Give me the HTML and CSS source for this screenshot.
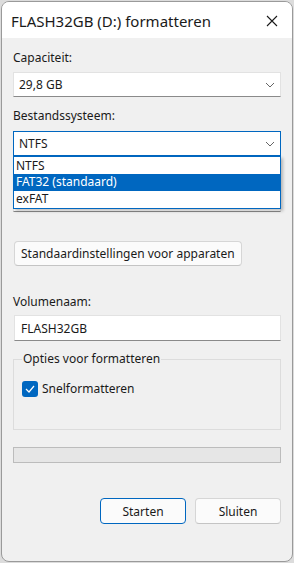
FILE: index.html
```html
<!DOCTYPE html>
<html>

<head>
    <title>FLASH32GB (D:) formatteren</title>
    <link rel="stylesheet" href="styles.css">
</head>

<body>
    <div class="window">
        <div class="titlebar">
            <span class="title">FLASH32GB (D:) formatteren</span>
            <svg class="close" width="12" height="12" viewBox="0 0 12 12">
                <path d="M1 1 L11 11 M11 1 L1 11" stroke="#1a1a1a" stroke-width="1.1" fill="none" />
            </svg>
        </div>
        <div class="content">
            <div class="label first">Capaciteit:</div>
            <div class="combo">
                <span>29,8 GB</span>
                <svg class="chevron" width="10" height="6" viewBox="0 0 10 6">
                    <path d="M1 1 L5 5 L9 1" stroke="#666" stroke-width="1" fill="none" />
                </svg>
            </div>

            <div class="label second">Bestandssysteem:</div>
            <div class="combo-wrap">
                <div class="combo active">
                    <span>NTFS</span>
                    <svg class="chevron" width="10" height="6" viewBox="0 0 10 6">
                        <path d="M1 1 L5 5 L9 1" stroke="#666" stroke-width="1" fill="none" />
                    </svg>
                </div>
                <!-- open list lies over the next field -->
                <ul class="dropdown">
                    <li>NTFS</li>
                    <li class="selected">FAT32 (standaard)</li>
                    <li>exFAT</li>
                </ul>
            </div>

            <!-- allocation field, covered by the open list -->
            <div class="spacer"></div>
            <div class="combo"></div>

            <button class="btn defaults">Standaardinstellingen voor apparaten</button>

            <div class="label volume">Volumenaam:</div>
            <div class="textbox">FLASH32GB</div>

            <fieldset class="group">
                <legend>Opties voor formatteren</legend>
                <label class="check">
                    <span class="box">
                        <svg width="10" height="8" viewBox="0 0 10 8">
                            <path d="M1 4 L4 7 L9 1" stroke="#fff" stroke-width="1.2" fill="none" />
                        </svg>
                    </span>
                    Snelformatteren
                </label>
            </fieldset>

            <div class="progress"></div>

            <div class="actions">
                <button class="btn primary">Starten</button>
                <button class="btn">Sluiten</button>
            </div>
        </div>
    </div>
</body>

</html>
```

FILE: styles.css
```css
/* page and window frame */
body {
    margin: 0;
    background: #dcdcdc;
    font-family: "Noto Sans", sans-serif;
    font-size: 12px;
    color: #1a1a1a;
}

.window {
    margin: 1px 1px 0 1px;
    width: 290px;
    height: 559px;
    border: 1px solid #9a9a9a;
    border-radius: 8px;
    background: #f0f0f0;
    overflow: hidden;
    display: flex;
    flex-direction: column;
}

/* title bar */
.titlebar {
    height: 36px;
    background: #fff;
    display: flex;
    align-items: center;
    justify-content: space-between;
    padding: 0 14px 0 9px;
    flex-shrink: 0;
}

.title {
    font-size: 15px;
    margin-top: 2px;
}

.close {
    margin-top: 1px;
}

/* dialog body */
.content {
    padding: 0 11px 0 11px;
    display: flex;
    flex-direction: column;
    align-items: stretch;
}

.label {
    line-height: 16px;
    margin-top: 11px;
    margin-bottom: 6px;
}

.label.first {
    margin-top: 12px;
}

.label.second {
    margin-bottom: 7px;
}

.label.volume {
    margin-top: 28px;
    margin-bottom: 5px;
}

.spacer {
    height: 31px;
}

.combo {
    height: 25px;
    flex-shrink: 0;
    box-sizing: border-box;
    background: #fff;
    border: 1px solid #e2e2e2;
    border-bottom-color: #8a8a8a;
    display: flex;
    align-items: center;
    justify-content: space-between;
    padding: 0 5px 0 5px;
}

.combo.active {
    border: 1px solid #0067c0;
}

.combo-wrap {
    position: relative;
}

.dropdown {
    position: absolute;
    left: 0;
    right: 0;
    top: 25px;
    margin: 0;
    padding: 1px 0;
    list-style: none;
    background: #fff;
    border: 1px solid #0067c0;
    box-shadow: 2px 2px 3px rgba(0, 0, 0, 0.25);
    z-index: 2;
}

.dropdown li {
    height: 16px;
    line-height: 16px;
    padding-left: 2px;
}

.dropdown li.selected {
    height: 17px;
    background: #0067c0;
    color: #fff;
}

/* buttons */
.btn {
    font-family: inherit;
    font-size: 12px;
    color: #1a1a1a;
    background: #fbfbfb;
    border: 1px solid #d6d6d6;
    border-bottom-color: #c4c4c4;
    border-radius: 4px;
    height: 25px;
    padding: 0 6px;
}

.btn.defaults {
    align-self: flex-start;
    margin-top: 29px;
    margin-left: 1px;
}

.btn.primary {
    border: 1px solid #0067c0;
}

.textbox {
    height: 26px;
    box-sizing: border-box;
    background: #fff;
    border: 1px solid #e2e2e2;
    border-bottom-color: #8a8a8a;
    padding: 4px 6px 0 6px;
    margin-left: 1px;
}

/* options group */
.group {
    margin: 10px 0 0 0;
    padding: 13px 8px 0 8px;
    box-sizing: border-box;
    height: 79px;
    border: 1px solid #dcdcdc;
}

.group legend {
    padding: 0 1px 0 1px;
    line-height: 16px;
}

.check {
    display: flex;
    align-items: center;
    gap: 4px;
}

.box {
    width: 16px;
    height: 16px;
    border-radius: 3px;
    background: #0067c0;
    display: flex;
    align-items: center;
    justify-content: center;
}

.progress {
    margin-top: 17px;
    height: 16px;
    box-sizing: border-box;
    border: 1px solid #bcbcbc;
    background: #e6e6e6;
}

.actions {
    margin-top: 35px;
    display: flex;
    justify-content: flex-end;
    gap: 9px;
}

.actions .btn {
    width: 86px;
    height: 26px;
}
```
